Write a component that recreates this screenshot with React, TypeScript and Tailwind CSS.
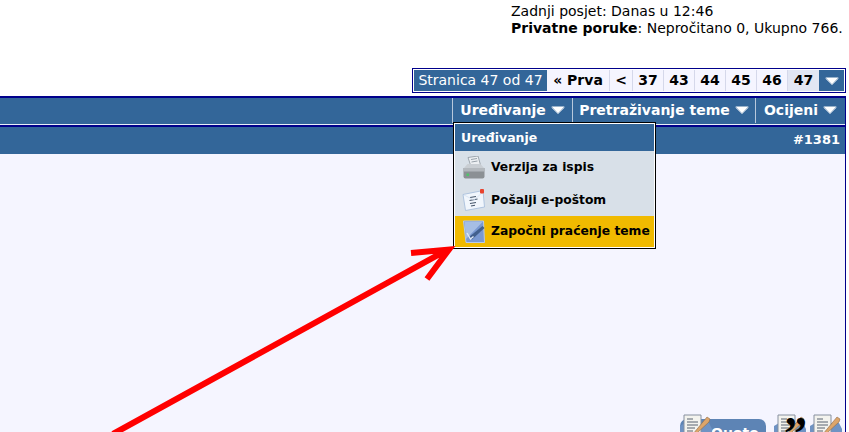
import React from "react";

const PAGES = ["37", "43", "44", "45", "46"];
const TOOLS = [
  { label: "Uređivanje", className: "w-[120px]" },
  { label: "Pretraživanje teme", className: "w-[183px]" },
  { label: "Ocijeni", className: "w-[90px]" },
];

function Caret({ className = "" }: { className?: string }) {
  return (
    <svg width="14" height="8" viewBox="0 0 14 8" className={className}>
      <path d="M0.500 0.500h13L7 7.500z" fill="#ffffff" />
      <path d="M0.500 1.500L7 7.800l6.500-6.300" fill="none" stroke="#a9bdd2" strokeWidth="1" />
    </svg>
  );
}

function PrinterIcon() {
  return (
    <svg width="24" height="24" viewBox="0 0 24 24">
      <path d="M6 1.500l10-1.500 2.500 9H8.500z" fill="#eceff2" stroke="#8d959e" strokeWidth="0.800" />
      <path d="M9 3.500l6-1M9.500 6l6-1" stroke="#8f98a2" strokeWidth="0.900" />
      <path d="M2 12l3.500-4h13l3.500 4z" fill="#c9ced3" />
      <path d="M1.500 12h21v8.500a2 2 0 0 1-2 2h-17a2 2 0 0 1-2-2z" fill="#8b9094" />
      <rect x="1.500" y="12" width="21" height="3.500" fill="#b3b8bd" />
      <rect x="4.500" y="17.500" width="2.500" height="2.500" fill="#4ec46a" />
    </svg>
  );
}

function MailIcon() {
  return (
    <svg width="24" height="24" viewBox="0 0 24 24">
      <path d="M1 6.500l20-4 1.500 16.500-19 3.500z" fill="#f1f6fc" stroke="#a9c0dc" strokeWidth="0.900" />
      <path d="M8 9.500l6-1M7.500 12.500l8-1.500M8 15.500l6-1M9 18l4-0.800" stroke="#46566a" strokeWidth="1.100" />
      <path d="M2 7l10 5 9-8" fill="none" stroke="#d3e0f0" strokeWidth="0.800" />
      <rect x="18" y="1" width="4" height="4.500" rx="1" fill="#e8432e" />
    </svg>
  );
}

function WatchIcon() {
  return (
    <svg width="24" height="24" viewBox="0 0 24 24">
      <path d="M1.500 1h20l1 21.500H4z" fill="#7a99d2" stroke="#b9cbe8" strokeWidth="1" />
      <path d="M2.500 2h18L4 19z" fill="#a6bee4" />
      <path d="M7 17L20.500 6l2 2L10 19.500z" fill="#42608e" />
      <path d="M5 13l3.500 6 3-2.500" fill="none" stroke="#dfe8f6" strokeWidth="1.400" />
    </svg>
  );
}

function DocIcon() {
  return (
    <svg width="32" height="24" viewBox="0 0 32 24">
      <path d="M0 12l5-3h24l3 6v9H0z" fill="#6f93c4" />
      <path d="M4 1h17v22H4z" fill="#f3f3ee" stroke="#87909f" strokeWidth="1" />
      <path d="M7 5h6M7 8h11M7 11h11M7 14h8M7 17h6" stroke="#596271" strokeWidth="1" />
      <path d="M13 20L27 3l3 2-1 3-12 11-4 2z" fill="#dda56a" stroke="#8f6b46" strokeWidth="0.600" />
    </svg>
  );
}

export default function App() {
  return (
    <div className="relative h-[432px] w-[849px] overflow-hidden bg-white font-['DejaVu_Sans',sans-serif] text-[14px] text-black">
      {/* User info */}
      <div className="h-[68px] pl-[511px] pt-[3px] leading-[17px]">
        <div>Zadnji posjet: Danas u 12:46</div>
        <div>
          <b>Privatne poruke</b>: Nepročitano 0, Ukupno 766.
        </div>
      </div>

      {/* Pagination */}
      <div className="flex justify-end pr-[3px]">
        <div className="flex h-[25px] border border-[#00008b] bg-white p-px">
          <div className="flex w-[133px] items-center justify-center whitespace-nowrap bg-[#336699] text-white">
            Stranica 47 od 47
          </div>
          <div className="flex w-[63px] items-center justify-center border-r border-[#d5d8ea] bg-[#f5f5ff] font-bold">
            « Prva
          </div>
          <div className="flex w-[23px] items-center justify-center border-r border-[#d5d8ea] bg-[#f5f5ff] font-bold">
            &lt;
          </div>
          {PAGES.map((p) => (
            <div
              key={p}
              className="flex w-[31px] items-center justify-center border-r border-[#d5d8ea] bg-[#f5f5ff] font-bold"
            >
              {p}
            </div>
          ))}
          <div className="flex w-[31px] items-center justify-center bg-[#e2e6f3] font-bold">47</div>
          <div className="flex w-[25px] items-center justify-center bg-[#336699]">
            <Caret />
          </div>
        </div>
      </div>

      {/* Thread tools */}
      <div className="mt-[3px] mr-[3px] flex h-[28px] justify-end border-t-2 border-r border-[#00008b] bg-[#336699] pb-px">
        {TOOLS.map((t) => (
          <div
            key={t.label}
            className={`flex items-center justify-center gap-[5px] whitespace-nowrap border-l border-[#b8c8dc] pb-[1px] font-bold text-white ${t.className}`}
          >
            {t.label}
            <Caret />
          </div>
        ))}
      </div>

      {/* Post */}
      <div className="mr-[3px] h-[310px] border-r border-[#00008b] bg-[#f5f5ff]">
        <div className="h-[30px] border-t border-[#e8eef8]">
          <div className="flex h-[29px] items-center justify-end border-t-2 border-[#00008b] bg-[#336699] pb-[2px] pr-[5px] text-[13px] font-bold text-white">
            #1381
          </div>
        </div>
        <div className="flex h-[280px] items-start justify-end gap-[4px] pr-[3px] pt-[260px]">
          <div className="relative mr-[4px] mt-[5px] h-[24px] w-[86px] rounded-t-[7px] bg-[#5d84b5] pl-[31px] pt-[5px] text-[14px] font-bold leading-[18px] text-white">
            Quote
            <div className="absolute -top-[5px] left-0">
              <DocIcon />
            </div>
          </div>
          <div className="relative h-[17px] w-[32px]">
            <DocIcon />
            <span className="absolute -top-[3px] left-[10px] font-['Liberation_Serif',serif] text-[46px] font-bold leading-[46px]">
              ”
            </span>
          </div>
          <div className="h-[17px] w-[32px]">
            <DocIcon />
          </div>
        </div>
      </div>

      {/* Dropdown menu */}
      <div className="absolute left-[453px] top-[122px] w-[203px] border border-black bg-white p-px text-[12.3px] font-bold">
        <div className="flex h-[27px] items-center bg-[#336699] pl-[6px] pt-[2px] text-[12.5px] text-white">Uređivanje</div>
        <div className="flex h-[33px] items-center gap-[5px] whitespace-nowrap bg-[#d8e0e8] pl-[7px]">
          <PrinterIcon />
          Verzija za ispis
        </div>
        <div className="flex h-[32px] items-center gap-[5px] whitespace-nowrap bg-[#d8e0e8] pl-[7px]">
          <MailIcon />
          Pošalji e-poštom
        </div>
        <div className="flex h-[31px] items-center gap-[5px] whitespace-nowrap bg-[#f0ba00] pl-[7px]">
          <WatchIcon />
          Započni praćenje teme
        </div>
      </div>

      {/* Annotation arrow */}
      <svg className="absolute inset-0" width="849" height="432" viewBox="0 0 849 432">
        <path
          d="M113 434L447 250M411 253L449 249.500L427 279"
          fill="none"
          stroke="#ff0000"
          strokeWidth="6"
        />
      </svg>
    </div>
  );
}
